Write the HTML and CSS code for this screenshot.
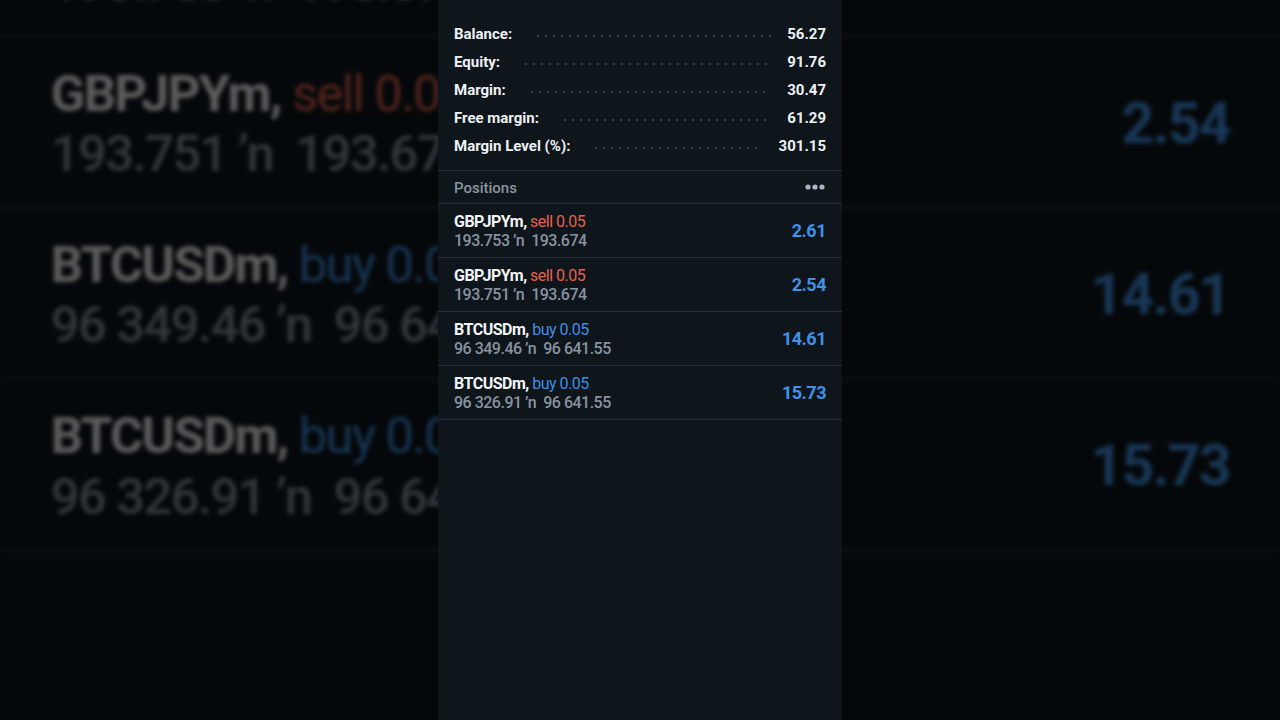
FILE: index.html
```html
<!DOCTYPE html>
<html lang="en">
<head>
    <meta charset="UTF-8">
    <meta name="viewport" content="width=device-width, initial-scale=1.0">
    <title>Trade</title>
    <link rel="stylesheet" href="styles.css">
</head>
<body>
    <div class="backdrop" id="backdrop" aria-hidden="true"></div>

    <div class="panel" id="panel">
        <div class="summary">
            <div class="line"><span class="label">Balance:</span><span class="leader"></span><span class="amount">56.27</span></div>
            <div class="line"><span class="label">Equity:</span><span class="leader"></span><span class="amount">91.76</span></div>
            <div class="line"><span class="label">Margin:</span><span class="leader"></span><span class="amount">30.47</span></div>
            <div class="line"><span class="label">Free margin:</span><span class="leader"></span><span class="amount">61.29</span></div>
            <div class="line"><span class="label">Margin Level (%):</span><span class="leader"></span><span class="amount">301.15</span></div>
        </div>

        <div class="section-head">
            <span>Positions</span>
            <svg class="more" width="20" height="6" viewBox="0 0 20 6">
                <circle cx="3" cy="3" r="2.6"/>
                <circle cx="10" cy="3" r="2.6"/>
                <circle cx="17" cy="3" r="2.6"/>
            </svg>
        </div>

        <div class="position">
            <div class="info">
                <div class="title">GBPJPYm, <span class="sell">sell 0.05</span></div>
                <div class="prices">193.753 ’n&nbsp; 193.674</div>
            </div>
            <div class="profit">2.61</div>
        </div>
        <div class="position">
            <div class="info">
                <div class="title">GBPJPYm, <span class="sell">sell 0.05</span></div>
                <div class="prices">193.751 ’n&nbsp; 193.674</div>
            </div>
            <div class="profit">2.54</div>
        </div>
        <div class="position">
            <div class="info">
                <div class="title">BTCUSDm, <span class="buy">buy 0.05</span></div>
                <div class="prices">96 349.46 ’n&nbsp; 96 641.55</div>
            </div>
            <div class="profit">14.61</div>
        </div>
        <div class="position">
            <div class="info">
                <div class="title">BTCUSDm, <span class="buy">buy 0.05</span></div>
                <div class="prices">96 326.91 ’n&nbsp; 96 641.55</div>
            </div>
            <div class="profit">15.73</div>
        </div>
    </div>

    <script>
        // blurred, zoomed copy of the panel behind it
        const copy = document.getElementById('panel').cloneNode(true);
        copy.removeAttribute('id');
        copy.classList.add('zoomed');
        document.getElementById('backdrop').appendChild(copy);
    </script>
</body>
</html>
```

FILE: styles.css
```css
body {
    margin: 0;
    height: 720px;
    overflow: hidden;
    background-color: #05080b;
    font-family: Roboto, "Liberation Sans", sans-serif;
    color: #eef1f4;
}
.backdrop {
    position: absolute;
    top: 0;
    left: 0;
    width: 1280px;
    height: 720px;
    overflow: hidden;
}
.panel {
    position: relative;
    width: 404px;
    height: 720px;
    margin: 0 auto;
    background-color: #0e161c;
}
.panel.zoomed {
    position: absolute;
    top: 0;
    left: 0;
    margin: 0;
    transform-origin: 0 0;
    transform: scale(3.17) translateY(-246px);
    filter: brightness(0.37) blur(0.6px);
}
.summary {
    padding: 20px 16px 10px;
    border-bottom: 1px solid #252e36;
}
.line {
    display: flex;
    align-items: center;
    height: 28px;
    font-size: 15px;
    font-weight: 700;
}
.leader {
    flex: 1;
    height: 2px;
    margin: 4px 16px 0 22px;
    background-image: radial-gradient(circle, #36414b 0.8px, transparent 1.1px);
    background-size: 8px 2px;
    background-repeat: repeat-x;
}
.section-head {
    display: flex;
    align-items: center;
    justify-content: space-between;
    height: 32px;
    padding: 0 16px;
    border-bottom: 1px solid #252e36;
    color: #8a95a0;
    font-size: 15px;
    font-weight: 500;
}
.section-head span {
    padding-top: 2px;
}
.more {
    fill: #aab4be;
    margin-right: 1px;
}
.position {
    display: flex;
    align-items: center;
    justify-content: space-between;
    height: 53px;
    padding: 0 16px;
    border-bottom: 1px solid #252e36;
    letter-spacing: -0.5px;
}
.info {
    padding-top: 1px;
}
.title {
    font-size: 16px;
    font-weight: 700;
    line-height: 19px;
    color: #f3f5f7;
}
.title span {
    font-weight: 400;
}
.sell {
    color: #e5614e;
}
.buy {
    color: #3f8ee3;
}
.prices {
    font-size: 16px;
    font-weight: 500;
    line-height: 19px;
    color: #8893a0;
}
.profit {
    font-size: 18px;
    font-weight: 700;
    color: #4191e6;
}
```
